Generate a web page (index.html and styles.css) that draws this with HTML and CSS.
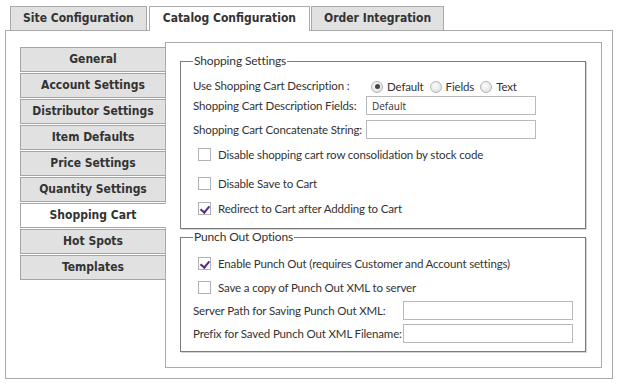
FILE: index.html
```html
<!DOCTYPE html>
<html lang="en">
<head>
    <meta charset="UTF-8">
    <meta name="viewport" content="width=device-width, initial-scale=1.0">
    <title>Catalog Configuration</title>
    <link rel="stylesheet" href="styles.css">
</head>
<body>
    <div class="tabs">
        <div class="tab">Site Configuration</div>
        <div class="tab active">Catalog Configuration</div>
        <div class="tab">Order Integration</div>
    </div>
    <div class="tab-panel">
        <div class="side-nav">
            <div class="nav-btn">General</div>
            <div class="nav-btn">Account Settings</div>
            <div class="nav-btn">Distributor Settings</div>
            <div class="nav-btn">Item Defaults</div>
            <div class="nav-btn">Price Settings</div>
            <div class="nav-btn">Quantity Settings</div>
            <div class="nav-btn active">Shopping Cart</div>
            <div class="nav-btn">Hot Spots</div>
            <div class="nav-btn">Templates</div>
        </div>
        <div class="content">
            <fieldset class="group shopping">
                <legend>Shopping Settings</legend>
                <div class="radio-row">
                    <span class="label">Use Shopping Cart Description :</span>
                    <label class="radio"><input type="radio" name="desc" checked> Default</label>
                    <label class="radio"><input type="radio" name="desc"> Fields</label>
                    <label class="radio"><input type="radio" name="desc"> Text</label>
                </div>
                <div class="field-row first">
                    <span class="label">Shopping Cart Description Fields:</span>
                    <input type="text" class="text-input" value="Default">
                </div>
                <div class="field-row">
                    <span class="label">Shopping Cart Concatenate String:</span>
                    <input type="text" class="text-input">
                </div>
                <label class="check-row">
                    <input type="checkbox" class="chk"> Disable shopping cart row consolidation by stock code
                </label>
                <label class="check-row spaced">
                    <input type="checkbox" class="chk"> Disable Save to Cart
                </label>
                <label class="check-row">
                    <input type="checkbox" class="chk" checked> Redirect to Cart after Addding to Cart
                </label>
            </fieldset>

            <fieldset class="group punch">
                <legend>Punch Out Options</legend>
                <label class="check-row">
                    <input type="checkbox" class="chk" checked> Enable Punch Out (requires Customer and Account settings)
                </label>
                <label class="check-row">
                    <input type="checkbox" class="chk"> Save a copy of Punch Out XML to server
                </label>
                <div class="field-row">
                    <span class="label wide">Server Path for Saving Punch Out XML:</span>
                    <input type="text" class="text-input">
                </div>
                <div class="field-row">
                    <span class="label wide">Prefix for Saved Punch Out XML Filename:</span>
                    <input type="text" class="text-input">
                </div>
            </fieldset>
        </div>
    </div>
</body>
</html>
```

FILE: styles.css
```css
* {
    box-sizing: border-box;
}

body {
    margin: 0;
    padding: 6px 0 0 5px;
    background-color: white;
    font-family: 'Lato', 'Open Sans', sans-serif;
    font-size: 11.5px;
    letter-spacing: -0.15px;
    color: #333;
    white-space: nowrap;
}

/* Top tabs */
.tabs {
    display: flex;
    gap: 1px;
    padding-left: 5px;
}

.tab {
    height: 24px;
    line-height: 22px;
    padding: 0 12px;
    background-color: #e1e1e1;
    border: 1px solid #aaa;
    border-bottom: none;
    font-family: 'DejaVu Sans Condensed', 'DejaVu Sans', sans-serif;
    font-stretch: condensed;
    font-weight: bold;
    font-size: 12px;
    letter-spacing: 0;
    color: #333;
}

.tab.active {
    background-color: white;
    height: 25px;
    margin-bottom: -1px;
    margin-left: 1px;
    padding: 0 13px;
    position: relative;
    z-index: 1;
}

.tab-panel {
    display: flex;
    align-items: flex-start;
    width: 608px;
    height: 349px;
    border: 1px solid #aaa;
    padding: 11px 10px 10px 14px;
}

/* Left side menu */
.side-nav {
    width: 146px;
    margin-top: 5px;
    display: flex;
    flex-direction: column;
    gap: 1px;
}

.nav-btn {
    height: 25px;
    line-height: 23px;
    text-align: center;
    background-color: #e1e1e1;
    border: 1px solid #a5a5a5;
    font-family: 'DejaVu Sans Condensed', 'DejaVu Sans', sans-serif;
    font-stretch: condensed;
    font-weight: bold;
    font-size: 12px;
    letter-spacing: 0;
    color: #333;
}

.nav-btn.active {
    background-color: white;
    border-right-color: white;
    position: relative;
    z-index: 1;
}

/* Settings panel */
.content {
    width: 437px;
    height: 326px;
    margin-left: -1px;
    border: 1px solid #aaa;
    padding: 10px 15px 0 14px;
}

.group {
    margin: 0;
    min-width: 0;
    border: 1px solid #7c7c7c;
    box-shadow: 1px 1px 0 #d4d4d4;
    padding: 6px 0 10px 12px;
}

.group legend {
    padding: 0 1px;
    line-height: 16px;
    font-size: 12px;
    color: #333;
}

.group.punch {
    padding: 8px 0 8px 12px;
}

.label {
    width: 173px;
    flex-shrink: 0;
}

.label.wide {
    width: 210px;
}

.radio-row {
    display: flex;
    align-items: center;
    height: 20px;
}

.radio {
    display: flex;
    align-items: center;
    margin-left: 5px;
    margin-right: 1px;
    padding-top: 3px;
}

.radio + .radio {
    margin-left: 5px;
}

.radio input {
    appearance: none;
    width: 12px;
    height: 12px;
    margin: 0 4px 0 0;
    border: 1px solid #b4b4b4;
    border-radius: 50%;
    background: radial-gradient(circle at 40% 35%, #fbfbfb, #dcdcdc);
    display: grid;
    place-items: center;
}

.radio input:checked::after {
    content: "";
    width: 5px;
    height: 5px;
    border-radius: 50%;
    background-color: #444;
}

.field-row {
    display: flex;
    align-items: center;
    margin-top: 4px;
}

.field-row.first {
    margin-top: 1px;
}

.shopping .field-row + .field-row {
    margin-top: 5px;
}

.text-input {
    width: 170px;
    height: 19px;
    border: 1px solid #b9b9b9;
    padding: 0 5px;
    font-family: 'Open Sans', sans-serif;
    font-size: 10px;
    letter-spacing: 0;
    color: #333;
    outline: none;
}

.check-row {
    display: flex;
    align-items: center;
    height: 20px;
    margin-top: 4px;
    padding-left: 5px;
}

.shopping .check-row {
    margin-top: 5px;
}

.shopping .check-row.spaced {
    margin-top: 9px;
}

.punch .check-row:first-of-type {
    margin-top: 0;
}

.chk {
    appearance: none;
    width: 13px;
    height: 13px;
    margin: 0 7px 0 0;
    border: 1px solid #b2b2b2;
    background-color: white;
    position: relative;
}

.chk:checked::after {
    content: "";
    position: absolute;
    left: 3px;
    top: 1px;
    width: 4px;
    height: 7px;
    border: solid #5b2a86;
    border-width: 0 2px 2px 0;
    transform: rotate(40deg);
}
```
